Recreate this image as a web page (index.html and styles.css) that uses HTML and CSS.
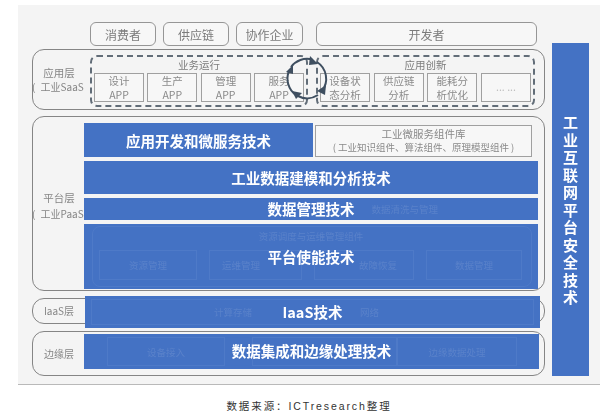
FILE: index.html
```html
<!DOCTYPE html>
<html lang="zh">
<head>
<meta charset="utf-8">
<title>工业互联网平台架构</title>
<link rel="stylesheet" href="styles.css">
</head>
<body>
<div class="panel">
  <div class="main">
    <div class="actors">
      <div class="actor">消费者</div>
      <div class="actor">供应链</div>
      <div class="actor actor-wide">协作企业</div>
      <div class="actor actor-dev">开发者</div>
    </div>

    <section class="frame frame-app">
      <div class="label"><span class="label-top">应用层</span><span class="label-sub">( 工业SaaS</span></div>
      <div class="group group-run">
        <div class="group-title">业务运行</div>
        <div class="apps">
          <div class="app">设计<br>APP</div>
          <div class="app">生产<br>APP</div>
          <div class="app">管理<br>APP</div>
          <div class="app">服务<br>APP</div>
        </div>
      </div>
      <div class="group group-new">
        <div class="group-title">应用创新</div>
        <div class="apps">
          <div class="app">设备状<br>态分析</div>
          <div class="app">供应链<br>分析</div>
          <div class="app">能耗分<br>析优化</div>
          <div class="app app-more">... ...</div>
        </div>
      </div>
      <svg class="cycle" width="50" height="50" viewBox="0 0 50 50" aria-hidden="true">
        <path class="cycle-arc" d="M8 13A20 20 0 0 1 29 5.500"/>
        <path class="cycle-arc" d="M34 8A20 20 0 0 1 39 37"/>
        <path class="cycle-arc" d="M35 41A20 20 0 0 1 15 42"/>
        <path class="cycle-arc" d="M13 41A20 20 0 0 1 6 17"/>
        <path class="cycle-head" d="M3 18L10 11L10 20Z"/>
        <path class="cycle-head" d="M27 2L35 10L26 11Z"/>
        <path class="cycle-head" d="M43 31L42 41L34 37Z"/>
        <path class="cycle-head" d="M9 37L19 39L13 45Z"/>
      </svg>
    </section>

    <section class="frame frame-platform">
      <div class="label"><span class="label-top">平台层</span><span class="label-sub">( 工业PaaS</span></div>
      <div class="stack">
        <div class="stack-row">
          <div class="bar bar-dev">应用开发和微服务技术</div>
          <div class="library">
            <div class="library-title">工业微服务组件库</div>
            <div class="library-note">( 工业知识组件、算法组件、原理模型组件 )</div>
          </div>
        </div>
        <div class="bar bar-model">工业数据建模和分析技术</div>
        <div class="bar bar-data">
          <div class="ghost ghost-data"><span>数据清洗与管理</span></div>
          <span class="bar-text">数据管理技术</span>
        </div>
        <div class="bar bar-enable">
          <div class="ghost ghost-enable">
            <div class="ghost-note">资源调度与运维管理组件</div>
            <div class="ghost-row">
              <div class="ghost-cell cell-a">资源管理</div>
              <div class="ghost-cell cell-b">运维管理</div>
              <div class="ghost-cell cell-c">故障恢复</div>
              <div class="ghost-cell cell-d">数据管理</div>
            </div>
          </div>
          <span class="bar-text">平台使能技术</span>
        </div>
      </div>
    </section>

    <section class="frame frame-iaas">
      <div class="label label-single">IaaS层</div>
      <div class="bar bar-iaas">
        <div class="ghost ghost-iaas"><span>计算存储</span><span>网络</span></div>
        <span class="bar-text">IaaS技术</span>
      </div>
    </section>

    <section class="frame frame-edge">
      <div class="label label-single">边缘层</div>
      <div class="bar bar-edge">
        <div class="ghost ghost-edge">
          <div class="ghost-cell edge-a">设备接入</div>
          <div class="ghost-cell edge-b"></div>
          <div class="ghost-cell edge-c">边缘数据处理</div>
        </div>
        <span class="bar-text">数据集成和边缘处理技术</span>
      </div>
    </section>
  </div>

  <aside class="security"><span class="security-text">工业互联网平台安全技术</span></aside>
</div>
<p class="caption">数据来源：ICTresearch整理</p>
</body>
</html>
```
FILE: styles.css
```css
* { box-sizing: border-box; }

html, body { margin: 0; padding: 0; background: #fff; }

body {
  width: 612px;
  height: 418px;
  overflow: hidden;
  font-family: "Noto Sans CJK SC", "Noto Sans", "Liberation Sans", sans-serif;
}

.panel {
  display: flex;
  gap: 7px;
  width: 582px;
  height: 380px;
  margin: 5px 0 0 18px;
  padding: 17px 0 0 14px;
  background: #f4f4f4;
  border-bottom: 1px solid #b9b9b9;
  filter: blur(0.35px);
}

.main { display: flex; flex-direction: column; width: 513px; }

/* Top row of stakeholders */
.actors { display: flex; gap: 7px; height: 24px; padding-left: 58px; }

.actor {
  display: flex;
  align-items: center;
  justify-content: center;
  width: 66px;
  color: #7b7b7b;
  font-size: 12px;
  background: #f7f7f7;
  border: 1px solid #969696;
  border-radius: 6px;
}

.actor-wide { width: 67px; }
.actor-dev { width: 221px; margin-left: 6px; }

/* Layer frames */
.frame {
  position: relative;
  display: flex;
  flex-shrink: 0;
  padding: 1px;
  border: 1px solid #858585;
  border-radius: 12px;
}

.frame-app { height: 61px; margin-top: 3px; padding-top: 5px; }
.frame-platform { height: 175px; margin-top: 6px; padding-top: 6px; }
.frame-iaas { height: 26px; margin-top: 7px; }
.frame-edge { height: 45px; margin-top: 7px; }

.label {
  display: flex;
  flex-direction: column;
  justify-content: center;
  flex-shrink: 0;
  width: 50px;
  color: #858585;
  font-size: 10px;
  line-height: 14px;
  text-align: center;
}

.label-top { display: block; font-size: 10.500px; }
.label-sub { display: block; margin-left: -2px; white-space: nowrap; text-align: left; word-spacing: 3px; }
.label-single { align-self: stretch; }

.frame-app .label { margin-right: 6px; padding-bottom: 4px; line-height: 14px; }
.frame-platform .label { line-height: 16px; }

/* Dashed app groups */
.group {
  flex-shrink: 0;
  height: 52px;
  padding: 0 2px;
  border: 2px dashed #626d78;
  border-radius: 7px;
}

.group-run { width: 218px; }
.group-new { width: 219px; margin-left: 8px; }

.group-title {
  height: 16px;
  color: #7c7c7c;
  font-size: 10.5px;
  line-height: 15px;
  text-align: center;
}

.apps { display: flex; justify-content: space-between; }

.app {
  width: 50px;
  height: 29px;
  color: #8a8a8a;
  font-size: 10.5px;
  line-height: 13.500px;
  text-align: center;
  background: #f7f7f7;
  border: 1px solid #a0a0a0;
}

.app-more { line-height: 25px; color: #bbb; }

.cycle { position: absolute; left: 250px; top: 4px; }
.cycle-arc { fill: none; stroke: #3f4f60; stroke-width: 2; }
.cycle-head { fill: #3f4f60; }

/* Blue technology bars */
.stack {
  display: flex;
  flex-direction: column;
  gap: 4px;
  width: 454px;
  flex-shrink: 0;
}

.stack-row { display: flex; gap: 2px; }

.bar {
  position: relative;
  display: flex;
  align-items: center;
  justify-content: center;
  flex-shrink: 0;
  color: #fff;
  font-size: 14.5px;
  font-weight: 700;
  background: #4472c4;
}

.bar-dev { width: 229px; height: 34px; }
.bar-model { height: 33px; }
.bar-data { height: 22px; }
.bar-enable { height: 65px; }
.bar-iaas { width: 455px; height: 32px; margin: -4px 0 0 1px; }
.bar-edge { width: 455px; height: 35px; margin: 1px 0 0 0; }

.bar-text { position: relative; padding-bottom: 2px; }
.bar-enable .bar-text { padding-bottom: 0; }

.library {
  width: 217px;
  height: 32px;
  margin-top: 2px;
  color: #8a8a8a;
  text-align: center;
  background: #f7f7f7;
  border: 1px solid #a0a0a0;
}

.library-title { font-size: 10.5px; font-weight: 400; line-height: 15px; }
.library-note { font-size: 9.500px; line-height: 12px; white-space: nowrap; }

/* Faint residue of hidden content inside the blue bars */
.ghost {
  position: absolute;
  display: flex;
  font-weight: 400;
  font-size: 9.500px;
  line-height: 12px;
  color: #5a82ca;
}

.ghost-cell {
  display: flex;
  align-items: center;
  border: 1px solid #4e7ac8;
}

.ghost-data { inset: 0; align-items: center; justify-content: flex-end; padding-right: 100px; }

.ghost-enable {
  inset: 2px 6px 2px 8px;
  flex-direction: column;
  justify-content: space-between;
  padding: 3px 8px 6px 6px;
  border: 1px solid #4e7ac8;
  border-radius: 8px;
}

.ghost-note { text-align: center; }
.ghost-row { display: flex; gap: 12px; height: 30px; }

.cell-a { width: 98px; justify-content: center; }
.cell-b { width: 93px; padding-left: 12px; }
.cell-c { width: 100px; padding-left: 44px; }
.cell-d { width: 96px; justify-content: center; }

.ghost-iaas {
  inset: 3px 6px;
  align-items: center;
  gap: 108px;
  padding-left: 122px;
  border: 1px solid #4e7ac8;
}

.ghost-edge { inset: 3px 22px 3px 23px; }
.edge-a { width: 118px; justify-content: center; }
.edge-b { width: 145px; margin-left: 27px; }
.edge-c { width: 120px; justify-content: center; }

/* Security column */
.security {
  display: flex;
  align-items: center;
  justify-content: center;
  flex-shrink: 0;
  width: 37px;
  height: 333px;
  margin-top: 21px;
  padding-top: 4px;
  color: #fff;
  background: #4472c4;
}

.security-text {
  writing-mode: vertical-rl;
  font-size: 15px;
  font-weight: 700;
  letter-spacing: 2.500px;
}

.caption {
  width: 582px;
  margin: 14px 0 0 18px;
  color: #333;
  font-family: "Liberation Sans", "Noto Sans CJK SC", sans-serif;
  font-size: 10.500px;
  line-height: 14px;
  letter-spacing: 1.900px;
  text-align: center;
}
```
